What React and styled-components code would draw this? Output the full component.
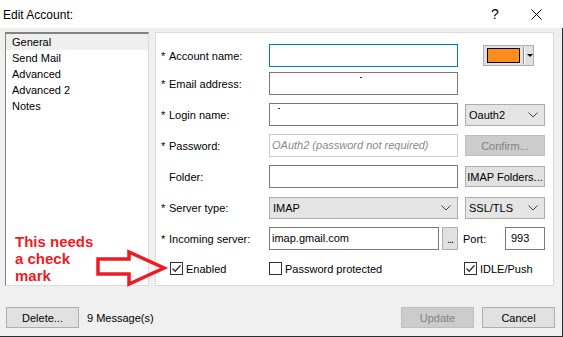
import React from "react";
import styled, { createGlobalStyle } from "styled-components";

const GlobalStyle = createGlobalStyle`
  html, body {
    margin: 0;
    padding: 0;
    background: #fff;
  }
  body {
    font-family: "Liberation Sans", Arial, sans-serif;
    font-size: 11px;
    color: #000;
  }
  * {
    box-sizing: border-box;
  }
`;

const Chevron = () => (
  <svg width="10" height="6" viewBox="0 0 10 6">
    <polyline points="0.5,0.5 5,5 9.5,0.5" fill="none" stroke="#444" strokeWidth="1" />
  </svg>
);

const Check = () => (
  <svg width="11" height="11" viewBox="0 0 11 11">
    <polyline points="1.5,5.5 4.2,8.3 9.5,2.2" fill="none" stroke="#333" strokeWidth="1.3" />
  </svg>
);

export default function App() {
  return (
    <>
      <GlobalStyle />
      <Dialog>
        <TitleBar>
          <Title>Edit Account:</Title>
          <TitleButton>?</TitleButton>
          <TitleButton $close>
            <svg width="11" height="11" viewBox="0 0 11 11">
              <path d="M0.5 0.5 L10.5 10.5 M10.5 0.5 L0.5 10.5" stroke="#000" strokeWidth="1" />
            </svg>
          </TitleButton>
        </TitleBar>

        <Body>
          <Main>
            <ListBox>
              <ListItem $selected>General</ListItem>
              <ListItem>Send Mail</ListItem>
              <ListItem>Advanced</ListItem>
              <ListItem>Advanced 2</ListItem>
              <ListItem>Notes</ListItem>
            </ListBox>

            <Panel>
              <Row $gap={0}>
                <Label><Star>*</Star>Account name:</Label>
                <TextBox $focused />
                <ColorPicker>
                  <Swatch />
                  <PickerDivider />
                  <PickerArrow />
                </ColorPicker>
              </Row>

              <Row $gap={5}>
                <Label><Star>*</Star>Email address:</Label>
                <TextBox>
                  <Speck $x={90} $y={4} />
                </TextBox>
              </Row>

              <Row $gap={8}>
                <Label><Star>*</Star>Login name:</Label>
                <TextBox>
                  <Speck $x={8} $y={4} />
                </TextBox>
                <Select>
                  Oauth2
                  <Chevron />
                </Select>
              </Row>

              <Row $gap={8}>
                <Label><Star>*</Star>Password:</Label>
                <TextBox $disabled>
                  <Placeholder>OAuth2 (password not required)</Placeholder>
                </TextBox>
                <Button $disabled>Confirm...</Button>
              </Row>

              <Row $gap={8}>
                <Label><Star />Folder:</Label>
                <TextBox />
                <Button>IMAP Folders...</Button>
              </Row>

              <Row $gap={8}>
                <Label><Star>*</Star>Server type:</Label>
                <Select>
                  IMAP
                  <Chevron />
                </Select>
                <Select>
                  SSL/TLS
                  <Chevron />
                </Select>
              </Row>

              <Row $gap={8}>
                <Label><Star>*</Star>Incoming server:</Label>
                <ServerCell>
                  <TextBox>imap.gmail.com</TextBox>
                  <DotsButton>...</DotsButton>
                </ServerCell>
                <PortCell>
                  <PortLabel>Port:</PortLabel>
                  <PortBox>993</PortBox>
                </PortCell>
              </Row>

              <CheckRow>
                <CheckItem $indent={9}>
                  <Box><Check /></Box>
                  Enabled
                </CheckItem>
                <CheckItem>
                  <Box />
                  Password protected
                </CheckItem>
                <CheckItem $indent={-1}>
                  <Box><Check /></Box>
                  IDLE/Push
                </CheckItem>
              </CheckRow>
            </Panel>
          </Main>

          <Footer>
            <Button $wide>Delete...</Button>
            <Status>9 Message(s)</Status>
            <Spacer />
            <Button $wide $disabled>Update</Button>
            <Button $wide>Cancel</Button>
          </Footer>
        </Body>

        <Note>
          This needs
          <br />
          a check
          <br />
          mark
        </Note>
        <Arrow width="80" height="42" viewBox="92 248 80 42">
          <polygon
            points="98,259 129,259 129,252 164,268 129,284 129,274 98,274"
            fill="none"
            stroke="#ed1c24"
            strokeWidth="3.5"
            strokeLinejoin="miter"
          />
        </Arrow>
      </Dialog>
    </>
  );
}

/* ================= STYLES ================= */
const Dialog = styled.div`
  position: relative;
  width: 563px;
  height: 337px;
  display: flex;
  flex-direction: column;
  background: #fff;
  overflow: hidden;
`;

const TitleBar = styled.div`
  height: 28px;
  display: flex;
  align-items: center;
  padding-left: 3px;
  background: #fff;
`;

const Title = styled.div`
  flex: 1;
  font-size: 12px;
  padding-top: 1px;
`;

const TitleButton = styled.div`
  width: ${({ $close }) => ($close ? "46px" : "44px")};
  display: flex;
  justify-content: center;
  font-size: 14px;
  padding-right: ${({ $close }) => ($close ? "8px" : "0")};
`;

const Body = styled.div`
  flex: 1;
  background: #f0f0f0;
  border-right: 1px solid #2e2e2e;
  border-bottom: 1px solid #2e2e2e;
  padding: 4px 0 0 5px;
  display: flex;
  flex-direction: column;
`;

const Main = styled.div`
  display: flex;
  gap: 6px;
  height: 254px;
`;

const ListBox = styled.div`
  width: 144px;
  background: #fff;
  border: 1px solid #dcdcdc;
  border-top: 2px solid #828282;
  border-left: 1px solid #828282;
`;

const ListItem = styled.div`
  height: 16px;
  line-height: 16px;
  padding-left: 6px;
  background: ${({ $selected }) => ($selected ? "#efefef" : "transparent")};
`;

const Panel = styled.div`
  width: 399px;
  background: #fff;
  border: 1px solid #dadada;
  padding: 11px 0 0 5px;
  display: flex;
  flex-direction: column;
`;

const Row = styled.div`
  display: grid;
  grid-template-columns: 101px 189px 80px;
  column-gap: 7px;
  height: 23px;
  align-items: center;
  margin-top: ${({ $gap }) => $gap}px;
`;

const Label = styled.div`
  display: flex;
  align-items: center;
  white-space: nowrap;
`;

const Star = styled.span`
  display: inline-block;
  width: 8px;
  font-size: 11px;
`;

const TextBox = styled.div`
  position: relative;
  height: 23px;
  background: #fff;
  border: 1px solid
    ${({ $focused, $disabled }) =>
      $focused ? "#0078d7" : $disabled ? "#cccccc" : "#7a7a7a"};
  display: flex;
  align-items: center;
  padding: 0 0 1px 2px;
  flex: 1;
  min-width: 0;
`;

const Speck = styled.span`
  position: absolute;
  left: ${({ $x }) => $x}px;
  top: ${({ $y }) => $y}px;
  width: 2px;
  height: 1px;
  background: #333;
`;

const Placeholder = styled.span`
  font-style: italic;
  color: #8a8a8a;
`;

const Button = styled.div`
  width: ${({ $wide }) => ($wide ? "73px" : "80px")};
  height: 21px;
  display: flex;
  align-items: center;
  justify-content: center;
  background: ${({ $disabled }) => ($disabled ? "#cccccc" : "#e1e1e1")};
  border: 1px solid ${({ $disabled }) => ($disabled ? "#bfbfbf" : "#adadad")};
  color: ${({ $disabled }) => ($disabled ? "#838383" : "#000")};
  white-space: nowrap;
`;

const Select = styled.div`
  height: 22px;
  background: #e5e5e5;
  border: 1px solid #acacac;
  display: flex;
  align-items: center;
  justify-content: space-between;
  padding: 0 6px 0 3px;
`;

const ColorPicker = styled.div`
  margin-left: 18px;
  width: 51px;
  height: 21px;
  background: #e1e1e1;
  border: 1px solid #adadad;
  display: flex;
  align-items: center;
  padding-left: 3px;
`;

const Swatch = styled.div`
  width: 34px;
  height: 15px;
  background: #fe8c1f;
  border: 1px solid #000;
`;

const PickerDivider = styled.div`
  width: 1px;
  height: 17px;
  margin-left: 3px;
  background: #8c8c8c;
  box-shadow: 1px 0 0 #fff;
`;

const PickerArrow = styled.div`
  margin-left: 3px;
  width: 0;
  height: 0;
  border-left: 3px solid transparent;
  border-right: 3px solid transparent;
  border-top: 3px solid #000;
`;

const ServerCell = styled.div`
  display: flex;
  gap: 3px;
  height: 23px;
`;

const DotsButton = styled.div`
  width: 16px;
  height: 23px;
  background: #e1e1e1;
  border: 1px solid #adadad;
  display: flex;
  align-items: flex-end;
  justify-content: center;
  padding-bottom: 4px;
  letter-spacing: -1px;
`;

const PortCell = styled.div`
  display: flex;
  align-items: center;
  margin-left: -2px;
`;

const PortLabel = styled.span`
  flex: 1;
`;

const PortBox = styled.div`
  width: 40px;
  height: 23px;
  border: 1px solid #7a7a7a;
  background: #fff;
  padding: 0 0 2px 5px;
  display: flex;
  align-items: center;
`;

const CheckRow = styled.div`
  display: grid;
  grid-template-columns: 101px 189px 80px;
  column-gap: 7px;
  margin-top: 12px;
  height: 13px;
  align-items: center;
`;

const CheckItem = styled.div`
  display: flex;
  align-items: center;
  gap: 3px;
  margin-left: ${({ $indent = 0 }) => $indent}px;
  white-space: nowrap;
`;

const Box = styled.div`
  width: 13px;
  height: 13px;
  border: 1px solid #333;
  background: #fff;
  display: flex;
  align-items: center;
  justify-content: center;
`;

const Footer = styled.div`
  display: flex;
  align-items: center;
  gap: 8px;
  padding: 21px 7px 0 1px;
`;

const Status = styled.span``;

const Spacer = styled.div`
  flex: 1;
`;

const Note = styled.div`
  position: absolute;
  left: 15px;
  top: 233px;
  color: #ed1c24;
  font-weight: bold;
  font-size: 15px;
  line-height: 17px;
`;

const Arrow = styled.svg`
  position: absolute;
  left: 92px;
  top: 248px;
  overflow: visible;
`;
